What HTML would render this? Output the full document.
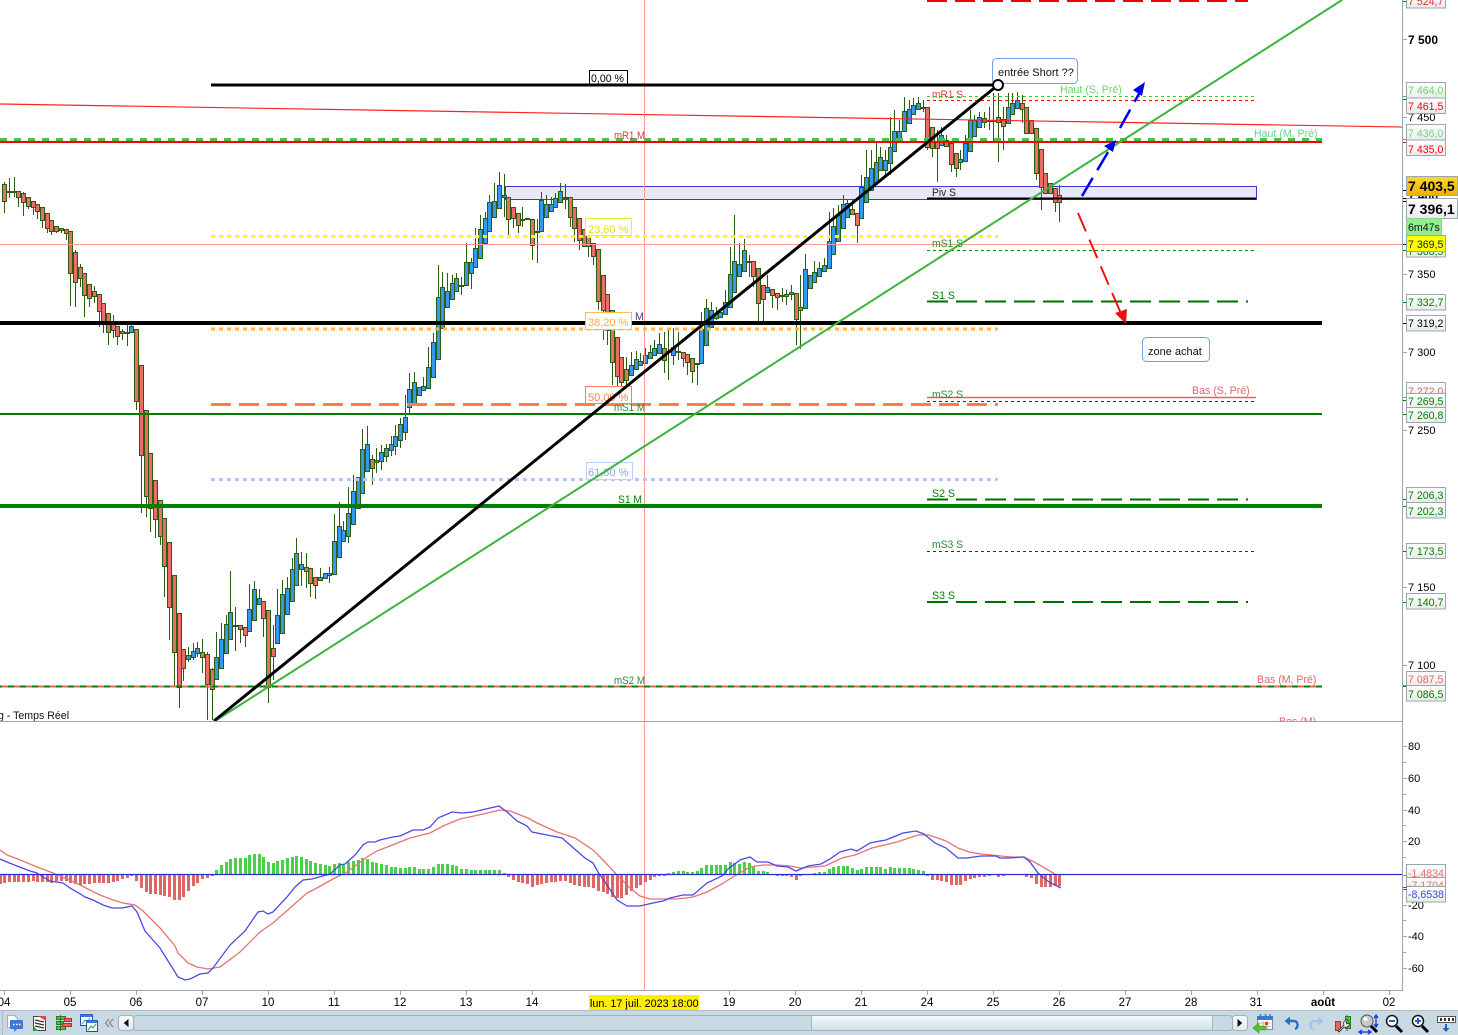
<!DOCTYPE html>
<html><head><meta charset="utf-8"><title>Chart</title>
<style>
html,body{margin:0;padding:0;background:#fff;width:1458px;height:1035px;overflow:hidden}
svg{display:block;font-family:"Liberation Sans",sans-serif;font-size:10.6px}
</style></head><body>
<svg width="1458" height="1035" viewBox="0 0 1458 1035" xmlns="http://www.w3.org/2000/svg">
<defs>
<linearGradient id="lb" x1="0" y1="0" x2="0" y2="1"><stop offset="0" stop-color="#fff"/><stop offset="1" stop-color="#eaecec"/></linearGradient>
<linearGradient id="gold" x1="0" y1="0" x2="0" y2="1"><stop offset="0" stop-color="#ffd92e"/><stop offset="1" stop-color="#efae00"/></linearGradient>
<linearGradient id="thumb" x1="0" y1="0" x2="0" y2="1"><stop offset="0" stop-color="#f2fbf9"/><stop offset="1" stop-color="#cfe2e6"/></linearGradient>
<linearGradient id="btn" x1="0" y1="0" x2="0" y2="1"><stop offset="0" stop-color="#fbfdfd"/><stop offset="1" stop-color="#dfe8ec"/></linearGradient>
</defs>
<rect width="1458" height="1035" fill="#fff"/>

<!-- pivot box -->
<rect x="505.5" y="186.5" width="751" height="13" fill="#e8e8f8" stroke="#3a3ad0"/>

<!-- wicks -->
<path fill="none" stroke="#2b5c12" stroke-width="1" d="M4.5 182V213M9.5 178V198M14.5 177V197M18.5 191V207M23.5 192V216M28.5 197V209M33.5 201V215M37.5 204V219M42.5 207V228M47.5 213V233M51.5 220V235M56.5 226V233M61.5 228V233M66.5 229V240M70.5 231V306M75.5 250V307M80.5 264V287M84.5 273V317M89.5 284V307M94.5 286V303M99.5 294V327M103.5 303V333M108.5 313V345M113.5 315V338M117.5 326V345M122.5 329V340M127.5 325V346M131.5 325V332M136.5 329V410M141.5 365V513M146.5 410V517M150.5 453V532M155.5 480V538M160.5 500V545M164.5 518V597M169.5 542V640M174.5 575V687M179.5 613V708M183.5 649V681M188.5 647V662M193.5 643V660M197.5 642V657M202.5 639V673M207.5 652V720M212.5 668V720M216.5 632V679M221.5 623V668M226.5 615V653M230.5 571V639M235.5 607V651M240.5 625V643M245.5 627V647M249.5 584V631M254.5 581V620M259.5 589V604M263.5 601V637M268.5 610V703M273.5 625V680M277.5 589V643M282.5 580V633M287.5 577V614M292.5 558V601M296.5 538V585M301.5 552V586M306.5 553V588M310.5 568V597M315.5 577V599M320.5 568V580M325.5 573V578M329.5 567V583M334.5 514V574M339.5 502V557M343.5 521V541M348.5 487V543M353.5 475V524M358.5 477V508M362.5 429V493M367.5 426V471M372.5 455V485M376.5 448V473M381.5 445V470M386.5 444V462M391.5 436V456M395.5 425V455M400.5 418V448M405.5 395V440M409.5 373V415M414.5 372V403M419.5 387V395M423.5 377V390M428.5 347V388M433.5 333V377M438.5 265V359M442.5 272V328M447.5 273V307M452.5 275V299M456.5 273V291M461.5 277V295M466.5 243V285M471.5 258V289M475.5 228V267M480.5 215V258M485.5 212V243M489.5 195V231M494.5 183V217M499.5 172V208M504.5 174V217M508.5 197V235M513.5 207V228M518.5 213V233M522.5 207V227M527.5 218V219M532.5 219V260M537.5 219V263M541.5 192V231M546.5 195V217M551.5 197V211M555.5 193V207M560.5 183V202M565.5 184V209M570.5 197V227M574.5 207V242M579.5 218V250M584.5 229V246M588.5 237V257M593.5 243V265M598.5 249V310M603.5 275V340M607.5 294V345M612.5 310V385M617.5 337V387M621.5 357V387M626.5 357V387M631.5 352V375M636.5 351V369M640.5 353V365M645.5 348V363M650.5 345V358M654.5 340V355M659.5 333V353M664.5 332V373M668.5 328V380M673.5 328V365M678.5 332V360M683.5 352V367M687.5 354V375M692.5 358V383M697.5 363V385M701.5 312V363M706.5 299V345M711.5 302V327M716.5 307V320M720.5 312V317M725.5 290V314M730.5 247V307M734.5 215V292M739.5 243V276M744.5 239V271M749.5 255V277M753.5 261V287M758.5 268V321M763.5 285V321M767.5 275V292M772.5 289V308M777.5 293V310M782.5 288V302M786.5 290V305M791.5 285V300M796.5 293V345M800.5 275V349M805.5 254V308M810.5 275V288M814.5 261V282M819.5 262V276M824.5 258V271M829.5 212V268M833.5 208V254M838.5 205V241M843.5 195V228M847.5 200V217M852.5 200V214M857.5 213V243M861.5 175V218M866.5 150V202M871.5 150V190M876.5 143V182M880.5 147V170M885.5 150V175M890.5 117V175M894.5 110V151M899.5 120V142M904.5 97V131M909.5 100V123M913.5 98V114M918.5 97V109M923.5 100V112M927.5 107V150M932.5 127V157M937.5 130V182M941.5 127V145M946.5 135V146M951.5 143V172M956.5 153V177M960.5 150V170M965.5 135V161M970.5 110V151M974.5 115V136M979.5 112V127M984.5 112V128M989.5 107V130M993.5 93V143M998.5 93V162M1003.5 107V150M1008.5 93V123M1012.5 93V114M1017.5 92V108M1022.5 95V123M1026.5 107V133M1031.5 120V133M1036.5 128V180M1041.5 149V210M1045.5 173V193M1050.5 183V193M1055.5 188V212M1059.5 185V222"/>
<!-- red bodies -->
<path fill="#ea6e65" stroke="#2b5c12" stroke-width="1" d="M2.5 184.5h4V201.5h-4zM12.5 191.5h4V192.5h-4zM16.5 191.5h4V197.5h-4zM21.5 193.5h4V202.5h-4zM26.5 197.5h4V206.5h-4zM31.5 201.5h4V207.5h-4zM35.5 204.5h4V211.5h-4zM40.5 207.5h4V220.5h-4zM45.5 213.5h4V228.5h-4zM49.5 220.5h4V231.5h-4zM54.5 226.5h4V231.5h-4zM59.5 228.5h4V230.5h-4zM64.5 229.5h4V233.5h-4zM68.5 231.5h4V273.5h-4zM73.5 252.5h4V282.5h-4zM78.5 267.5h4V278.5h-4zM82.5 273.5h4V295.5h-4zM87.5 284.5h4V298.5h-4zM92.5 291.5h4V296.5h-4zM97.5 294.5h4V311.5h-4zM101.5 303.5h4V323.5h-4zM106.5 313.5h4V332.5h-4zM111.5 322.5h4V330.5h-4zM115.5 326.5h4V336.5h-4zM120.5 331.5h4V333.5h-4zM125.5 332.5h4V333.5h-4zM134.5 329.5h4V401.5h-4zM139.5 365.5h4V455.5h-4zM144.5 410.5h4V496.5h-4zM148.5 453.5h4V508.5h-4zM153.5 480.5h4V519.5h-4zM158.5 500.5h4V536.5h-4zM162.5 518.5h4V566.5h-4zM167.5 542.5h4V607.5h-4zM172.5 575.5h4V652.5h-4zM177.5 613.5h4V687.5h-4zM181.5 649.5h4V668.5h-4zM200.5 652.5h4V657.5h-4zM205.5 654.5h4V684.5h-4zM210.5 669.5h4V689.5h-4zM233.5 625.5h4V626.5h-4zM238.5 625.5h4V629.5h-4zM243.5 627.5h4V635.5h-4zM261.5 601.5h4V618.5h-4zM266.5 610.5h4V687.5h-4zM271.5 648.5h4V656.5h-4zM304.5 567.5h4V571.5h-4zM308.5 568.5h4V583.5h-4zM313.5 577.5h4V585.5h-4zM370.5 459.5h4V468.5h-4zM459.5 285.5h4V286.5h-4zM506.5 197.5h4V219.5h-4zM511.5 207.5h4V218.5h-4zM516.5 213.5h4V225.5h-4zM520.5 219.5h4V220.5h-4zM530.5 219.5h4V245.5h-4zM535.5 231.5h4V232.5h-4zM563.5 197.5h4V198.5h-4zM568.5 197.5h4V217.5h-4zM572.5 207.5h4V228.5h-4zM577.5 218.5h4V240.5h-4zM582.5 229.5h4V246.5h-4zM586.5 237.5h4V246.5h-4zM591.5 243.5h4V256.5h-4zM596.5 249.5h4V301.5h-4zM601.5 275.5h4V310.5h-4zM605.5 294.5h4V330.5h-4zM610.5 310.5h4V362.5h-4zM615.5 337.5h4V376.5h-4zM619.5 357.5h4V382.5h-4zM624.5 369.5h4V380.5h-4zM662.5 348.5h4V360.5h-4zM666.5 351.5h4V352.5h-4zM676.5 351.5h4V352.5h-4zM681.5 352.5h4V358.5h-4zM685.5 354.5h4V362.5h-4zM690.5 358.5h4V371.5h-4zM695.5 363.5h4V364.5h-4zM747.5 261.5h4V262.5h-4zM751.5 261.5h4V276.5h-4zM756.5 268.5h4V303.5h-4zM761.5 285.5h4V299.5h-4zM770.5 289.5h4V295.5h-4zM775.5 293.5h4V297.5h-4zM780.5 295.5h4V296.5h-4zM794.5 293.5h4V319.5h-4zM798.5 307.5h4V310.5h-4zM850.5 209.5h4V214.5h-4zM855.5 213.5h4V225.5h-4zM921.5 107.5h4V108.5h-4zM925.5 107.5h4V147.5h-4zM930.5 127.5h4V148.5h-4zM935.5 141.5h4V148.5h-4zM944.5 140.5h4V146.5h-4zM949.5 143.5h4V164.5h-4zM954.5 153.5h4V168.5h-4zM987.5 120.5h4V121.5h-4zM991.5 120.5h4V121.5h-4zM996.5 117.5h4V122.5h-4zM1001.5 119.5h4V126.5h-4zM1020.5 103.5h4V109.5h-4zM1024.5 107.5h4V133.5h-4zM1029.5 120.5h4V133.5h-4zM1034.5 128.5h4V173.5h-4zM1039.5 149.5h4V187.5h-4zM1043.5 173.5h4V193.5h-4zM1048.5 183.5h4V193.5h-4zM1053.5 188.5h4V202.5h-4zM1057.5 195.5h4V202.5h-4z"/>
<!-- blue bodies -->
<path fill="#3399ee" stroke="#2b5c12" stroke-width="1" d="M7.5 191.5h4V192.5h-4zM129.5 326.5h4V332.5h-4zM186.5 655.5h4V659.5h-4zM191.5 651.5h4V657.5h-4zM195.5 648.5h4V653.5h-4zM214.5 657.5h4V679.5h-4zM219.5 639.5h4V668.5h-4zM224.5 624.5h4V653.5h-4zM228.5 612.5h4V639.5h-4zM247.5 609.5h4V631.5h-4zM252.5 589.5h4V620.5h-4zM257.5 598.5h4V604.5h-4zM275.5 615.5h4V643.5h-4zM280.5 594.5h4V633.5h-4zM285.5 588.5h4V614.5h-4zM290.5 569.5h4V601.5h-4zM294.5 553.5h4V585.5h-4zM299.5 564.5h4V569.5h-4zM318.5 577.5h4V580.5h-4zM323.5 573.5h4V578.5h-4zM327.5 573.5h4V575.5h-4zM332.5 541.5h4V574.5h-4zM337.5 526.5h4V557.5h-4zM341.5 530.5h4V541.5h-4zM346.5 513.5h4V536.5h-4zM351.5 491.5h4V524.5h-4zM356.5 477.5h4V508.5h-4zM360.5 449.5h4V493.5h-4zM365.5 444.5h4V471.5h-4zM374.5 460.5h4V462.5h-4zM379.5 452.5h4V461.5h-4zM384.5 448.5h4V456.5h-4zM389.5 444.5h4V450.5h-4zM393.5 436.5h4V446.5h-4zM398.5 424.5h4V440.5h-4zM403.5 417.5h4V432.5h-4zM407.5 389.5h4V407.5h-4zM412.5 382.5h4V403.5h-4zM417.5 387.5h4V395.5h-4zM421.5 386.5h4V390.5h-4zM426.5 367.5h4V388.5h-4zM431.5 342.5h4V377.5h-4zM436.5 297.5h4V359.5h-4zM440.5 287.5h4V328.5h-4zM445.5 291.5h4V307.5h-4zM450.5 283.5h4V299.5h-4zM454.5 278.5h4V291.5h-4zM464.5 262.5h4V285.5h-4zM469.5 262.5h4V273.5h-4zM473.5 248.5h4V267.5h-4zM478.5 229.5h4V258.5h-4zM483.5 218.5h4V243.5h-4zM487.5 202.5h4V231.5h-4zM492.5 201.5h4V217.5h-4zM497.5 185.5h4V208.5h-4zM502.5 195.5h4V197.5h-4zM525.5 218.5h4V219.5h-4zM539.5 200.5h4V231.5h-4zM544.5 204.5h4V217.5h-4zM549.5 204.5h4V211.5h-4zM553.5 198.5h4V207.5h-4zM558.5 191.5h4V202.5h-4zM629.5 365.5h4V375.5h-4zM634.5 359.5h4V369.5h-4zM638.5 361.5h4V365.5h-4zM643.5 355.5h4V363.5h-4zM648.5 352.5h4V358.5h-4zM652.5 348.5h4V355.5h-4zM657.5 344.5h4V353.5h-4zM671.5 347.5h4V355.5h-4zM699.5 329.5h4V363.5h-4zM704.5 308.5h4V345.5h-4zM709.5 310.5h4V327.5h-4zM714.5 314.5h4V318.5h-4zM718.5 312.5h4V317.5h-4zM723.5 302.5h4V314.5h-4zM728.5 274.5h4V307.5h-4zM732.5 261.5h4V292.5h-4zM737.5 264.5h4V276.5h-4zM742.5 250.5h4V271.5h-4zM765.5 287.5h4V292.5h-4zM784.5 294.5h4V296.5h-4zM789.5 292.5h4V294.5h-4zM803.5 269.5h4V308.5h-4zM808.5 275.5h4V288.5h-4zM812.5 272.5h4V282.5h-4zM817.5 268.5h4V276.5h-4zM822.5 265.5h4V271.5h-4zM827.5 241.5h4V268.5h-4zM831.5 226.5h4V254.5h-4zM836.5 215.5h4V241.5h-4zM841.5 204.5h4V228.5h-4zM845.5 203.5h4V217.5h-4zM859.5 187.5h4V218.5h-4zM864.5 177.5h4V202.5h-4zM869.5 168.5h4V190.5h-4zM874.5 162.5h4V182.5h-4zM878.5 157.5h4V170.5h-4zM883.5 160.5h4V170.5h-4zM888.5 147.5h4V163.5h-4zM892.5 131.5h4V151.5h-4zM897.5 131.5h4V142.5h-4zM902.5 111.5h4V131.5h-4zM907.5 109.5h4V123.5h-4zM911.5 105.5h4V114.5h-4zM916.5 103.5h4V109.5h-4zM939.5 135.5h4V145.5h-4zM958.5 159.5h4V162.5h-4zM963.5 143.5h4V161.5h-4zM968.5 120.5h4V151.5h-4zM972.5 120.5h4V136.5h-4zM977.5 117.5h4V127.5h-4zM982.5 118.5h4V122.5h-4zM1006.5 107.5h4V123.5h-4zM1010.5 103.5h4V114.5h-4zM1015.5 100.5h4V108.5h-4z"/>

<!-- long red line -->
<line x1="0" y1="104" x2="1402" y2="127" stroke="#f22" stroke-width="1.2"/>
<!-- crosshair -->
<line x1="0" y1="244.5" x2="1402" y2="244.5" stroke="#ff9999" stroke-width="1"/>
<line x1="644.5" y1="0" x2="644.5" y2="990" stroke="#ff9999" stroke-width="1"/>

<!-- fib lines -->
<line x1="211" y1="236.5" x2="998" y2="236.5" stroke="#ffff00" stroke-width="3" stroke-dasharray="4 4"/>
<line x1="211" y1="329" x2="998" y2="329" stroke="#ffb83d" stroke-width="3" stroke-dasharray="4 4"/>
<line x1="211" y1="404.5" x2="998" y2="404.5" stroke="#ff7f40" stroke-width="3" stroke-dasharray="20 8"/>
<line x1="211" y1="479.5" x2="998" y2="479.5" stroke="#b3c6ff" stroke-width="3" stroke-dasharray="4 4"/>

<!-- monthly lines -->
<line x1="0" y1="139.5" x2="1322" y2="139.5" stroke="#44c444" stroke-width="3" stroke-dasharray="7 7"/>
<line x1="0" y1="142" x2="1322" y2="142" stroke="#f00" stroke-width="2"/>
<line x1="0" y1="323" x2="1322" y2="323" stroke="#000" stroke-width="4"/>
<line x1="0" y1="414" x2="1322" y2="414" stroke="#008000" stroke-width="2"/>
<line x1="0" y1="506" x2="1322" y2="506" stroke="#008000" stroke-width="4"/>
<line x1="0" y1="686.5" x2="1322" y2="686.5" stroke="#008000" stroke-width="2"/>
<line x1="2" y1="686.5" x2="1322" y2="686.5" stroke="#e06666" stroke-width="2" stroke-dasharray="6 6"/>

<!-- weekly lines -->
<line x1="927" y1="0.5" x2="1248" y2="0.5" stroke="#e00" stroke-width="3" stroke-dasharray="20 8"/>
<line x1="927" y1="96.5" x2="1256" y2="96.5" stroke="#44c444" stroke-width="1" stroke-dasharray="3 3"/>
<line x1="927" y1="100.5" x2="1256" y2="100.5" stroke="#f00" stroke-width="1" stroke-dasharray="3 3"/>
<line x1="927" y1="198.5" x2="1256" y2="198.5" stroke="#000" stroke-width="2"/>
<line x1="927" y1="250.5" x2="1256" y2="250.5" stroke="#008000" stroke-width="1" stroke-dasharray="3 3"/>
<line x1="927" y1="301.5" x2="1248" y2="301.5" stroke="#006f00" stroke-width="2" stroke-dasharray="21 8"/>
<line x1="927" y1="397.5" x2="1256" y2="397.5" stroke="#e06666" stroke-width="1.5"/>
<line x1="927" y1="401.5" x2="1256" y2="401.5" stroke="#333" stroke-width="1" stroke-dasharray="3 3"/>
<line x1="927" y1="499.5" x2="1248" y2="499.5" stroke="#006f00" stroke-width="2" stroke-dasharray="21 8"/>
<line x1="927" y1="551.5" x2="1256" y2="551.5" stroke="#333" stroke-width="1" stroke-dasharray="3 3"/>
<line x1="927" y1="602" x2="1248" y2="602" stroke="#006f00" stroke-width="2" stroke-dasharray="21 8"/>

<!-- chart labels -->
<text x="932" y="98" fill="#e04040" textLength="31" lengthAdjust="spacingAndGlyphs">mR1 S</text>
<text x="932" y="196" fill="#222" textLength="24" lengthAdjust="spacingAndGlyphs">Piv S</text>
<text x="932" y="247" fill="#2a8a3a" textLength="31" lengthAdjust="spacingAndGlyphs">mS1 S</text>
<text x="932" y="299" fill="#008000" textLength="23" lengthAdjust="spacingAndGlyphs">S1 S</text>
<text x="932" y="398" fill="#2a8a3a" textLength="31" lengthAdjust="spacingAndGlyphs">mS2 S</text>
<text x="932" y="497" fill="#008000" textLength="23" lengthAdjust="spacingAndGlyphs">S2 S</text>
<text x="932" y="548" fill="#2a8a3a" textLength="31" lengthAdjust="spacingAndGlyphs">mS3 S</text>
<text x="932" y="599" fill="#008000" textLength="23" lengthAdjust="spacingAndGlyphs">S3 S</text>
<text x="614" y="139" fill="#d04040" textLength="31" lengthAdjust="spacingAndGlyphs">mR1 M</text>
<text x="614" y="411" fill="#2a8a3a" textLength="31" lengthAdjust="spacingAndGlyphs">mS1 M</text>
<text x="618" y="503" fill="#008000" textLength="24" lengthAdjust="spacingAndGlyphs">S1 M</text>
<text x="614" y="684" fill="#2a8a3a" textLength="31" lengthAdjust="spacingAndGlyphs">mS2 M</text>
<text x="635" y="320" fill="#446">M</text>
<text x="1060" y="93" fill="#66d866">Haut (S, Pré)</text>
<text x="1254" y="137" fill="#66d888">Haut (M, Pré)</text>
<text x="1192" y="394" fill="#e06666">Bas (S, Pré)</text>
<text x="1257" y="683" fill="#e06666">Bas (M, Pré)</text>
<text x="1279" y="725" fill="#e06666">Bas (M)</text>
<text x="-2" y="719" fill="#111">g - Temps Réel</text>

<!-- fib boxes -->
<rect x="585.5" y="218.5" width="46" height="17" fill="#fff" stroke="#eeee33"/>
<text x="588" y="233" fill="#e8dc20" font-size="11">23,60 %</text>
<rect x="585.5" y="312.5" width="46" height="17" fill="#fff" stroke="#ffbb55"/>
<text x="588" y="326" fill="#ffaa40" font-size="11">38,20 %</text>
<rect x="585.5" y="386.5" width="46" height="17" fill="#fff" stroke="#ff8050"/>
<text x="588" y="401" fill="#ff8050" font-size="11">50,00 %</text>
<rect x="586.5" y="462.5" width="46" height="17" fill="#fff" stroke="#bcd0ff"/>
<text x="588" y="476" fill="#8fa8e0" font-size="11">61,80 %</text>
<rect x="589.5" y="70.5" width="38" height="15" fill="#fff" stroke="#000"/>
<text x="591" y="82" fill="#000">0,00 %</text>

<!-- top black level -->
<line x1="211" y1="85" x2="998" y2="85" stroke="#000" stroke-width="3"/>
<!-- trend lines -->
<line x1="215" y1="721" x2="1342" y2="0" stroke="#3cb43c" stroke-width="2"/>
<line x1="214" y1="721" x2="998" y2="85" stroke="#000" stroke-width="3"/>

<!-- bubbles -->
<rect x="992.5" y="58.5" width="85" height="25" rx="4" fill="#fff" stroke="#6f9fef"/>
<text x="998" y="76" fill="#111" font-size="11">entrée Short ??</text>
<circle cx="998" cy="85" r="5" fill="#fff" stroke="#000" stroke-width="2"/>
<rect x="1142.5" y="337.5" width="67" height="24" rx="4" fill="#fff" stroke="#6f9fef"/>
<text x="1148" y="355" fill="#111" font-size="11">zone achat</text>

<!-- arrows -->
<path d="M1082 196L1114 142" stroke="#0000ee" stroke-width="2.5" fill="none" stroke-dasharray="21 9"/>
<polygon points="1116,140 1104,146 1113,152" fill="#0000ee"/>
<path d="M1120 128L1140 92" stroke="#0000ee" stroke-width="2.5" fill="none" stroke-dasharray="21 9"/>
<polygon points="1145,82 1133,90 1142,96" fill="#0000ee"/>
<path d="M1078 213L1122 316" stroke="#ee1111" stroke-width="2" fill="none" stroke-dasharray="20 9"/>
<polygon points="1126,324 1115,313 1127,309" fill="#ee1111"/>

<!-- lower panel -->
<rect x="0" y="722" width="1458" height="288" fill="#fff"/>
<line x1="644.5" y1="722" x2="644.5" y2="990" stroke="#ff9999" stroke-width="1"/>
<line x1="0" y1="721.5" x2="1402" y2="721.5" stroke="#9aa7ae" stroke-width="1"/>

<!-- histogram -->
<path fill="none" stroke="#e06666" stroke-width="3" d="M0.5 874v10M4.5 874v9M9.5 874v8M14.5 874v8M18.5 874v8M23.5 874v8M28.5 874v8M33.5 874v7M37.5 874v8M42.5 874v8M47.5 874v8M51.5 874v9M56.5 874v7M61.5 874v7M66.5 874v7M70.5 874v9M75.5 874v10M80.5 874v11M84.5 874v10M89.5 874v10M94.5 874v9M99.5 874v9M103.5 874v9M108.5 874v9M113.5 874v8M117.5 874v7M122.5 874v5M127.5 874v4M131.5 874v2M136.5 874v7M141.5 874v14M146.5 874v18M150.5 874v20M155.5 874v20M160.5 874v21M164.5 874v22M169.5 874v23M174.5 874v26M179.5 874v26M183.5 874v23M188.5 874v17M193.5 874v12M197.5 874v9M202.5 874v5M207.5 874v4M212.5 874v2M508.5 874v3M513.5 874v6M518.5 874v8M522.5 874v9M527.5 874v10M532.5 874v13M537.5 874v11M541.5 874v10M546.5 874v9M551.5 874v8M555.5 874v8M560.5 874v7M565.5 874v7M570.5 874v9M574.5 874v11M579.5 874v12M584.5 874v13M588.5 874v13M593.5 874v14M598.5 874v17M603.5 874v18M607.5 874v20M612.5 874v23M617.5 874v24M621.5 874v24M626.5 874v21M631.5 874v17M636.5 874v14M640.5 874v11M645.5 874v8M650.5 874v6M654.5 874v3M659.5 874v2M664.5 874v2M777.5 874v2M782.5 874v2M786.5 874v2M791.5 874v3M796.5 874v6M800.5 874v2M927.5 874v2M932.5 874v6M937.5 874v6M941.5 874v7M946.5 874v8M951.5 874v11M956.5 874v11M960.5 874v11M965.5 874v7M970.5 874v5M974.5 874v4M979.5 874v3M984.5 874v3M989.5 874v2M998.5 874v3M1003.5 874v2M1008.5 874v1M1022.5 874v1M1026.5 874v3M1031.5 874v4M1036.5 874v10M1041.5 874v13M1045.5 874v13M1050.5 874v13M1055.5 874v12M1059.5 874v12"/>
<path fill="none" stroke="#4cd04c" stroke-width="3" d="M216.5 874v-4M221.5 874v-9M226.5 874v-12M230.5 874v-15M235.5 874v-16M240.5 874v-16M245.5 874v-16M249.5 874v-19M254.5 874v-20M259.5 874v-20M263.5 874v-17M268.5 874v-12M273.5 874v-11M277.5 874v-13M282.5 874v-14M287.5 874v-16M292.5 874v-17M296.5 874v-18M301.5 874v-17M306.5 874v-15M310.5 874v-13M315.5 874v-11M320.5 874v-10M325.5 874v-9M329.5 874v-8M334.5 874v-10M339.5 874v-11M343.5 874v-9M348.5 874v-12M353.5 874v-13M358.5 874v-14M362.5 874v-16M367.5 874v-15M372.5 874v-12M376.5 874v-11M381.5 874v-10M386.5 874v-9M391.5 874v-7M395.5 874v-7M400.5 874v-6M405.5 874v-6M409.5 874v-7M414.5 874v-7M419.5 874v-5M423.5 874v-5M428.5 874v-5M433.5 874v-7M438.5 874v-10M442.5 874v-10M447.5 874v-10M452.5 874v-9M456.5 874v-8M461.5 874v-5M466.5 874v-5M471.5 874v-4M475.5 874v-4M480.5 874v-4M485.5 874v-4M489.5 874v-4M494.5 874v-4M499.5 874v-4M504.5 874v-1M668.5 874v-1M673.5 874v-2M678.5 874v-3M683.5 874v-3M687.5 874v-2M692.5 874v-2M697.5 874v-3M701.5 874v-6M706.5 874v-9M711.5 874v-9M716.5 874v-9M720.5 874v-9M725.5 874v-9M730.5 874v-12M734.5 874v-11M739.5 874v-10M744.5 874v-12M749.5 874v-11M753.5 874v-7M758.5 874v-3M763.5 874v-3M767.5 874v-2M814.5 874v-1M819.5 874v-2M824.5 874v-2M829.5 874v-5M833.5 874v-7M838.5 874v-8M843.5 874v-8M847.5 874v-8M852.5 874v-6M857.5 874v-4M861.5 874v-5M866.5 874v-7M871.5 874v-7M876.5 874v-7M880.5 874v-7M885.5 874v-5M890.5 874v-7M894.5 874v-6M899.5 874v-6M904.5 874v-6M909.5 874v-6M913.5 874v-5M918.5 874v-4M923.5 874v-3"/>

<!-- macd lines -->
<polyline fill="none" stroke="#e57373" stroke-width="1.3" points="0,850 7,855 18,859 37,867 53,873 67,879 80,885 100,895 113,900 123,903 135,905 143,911 160,928 175,946 178,953 188,963 197,967 208,969 220,967 240,952 260,932 273,923 290,908 307,893 315,889 333,879 347,872 367,857 377,851 390,846 400,842 410,838 430,833 443,826 460,819 483,814 500,810 510,811 528,818 537,823 557,832 575,838 593,850 603,860 617,875 630,888 640,896 650,899 677,899 693,897 707,892 720,885 733,877 750,867 763,865 777,865 790,866 800,868 813,867 825,866 842,858 855,855 872,848 897,842 918,835 929,835 946,841 958,848 969,852 981,854 1011,857 1024,857 1036,863 1055,874"/>
<polyline fill="none" stroke="#4a4ae6" stroke-width="1.3" points="0,859 7,862 17,866 30,871 37,873 43,877 50,881 63,883 70,888 82,895 85,897 93,900 103,905 112,908 122,908 132,906 137,912 145,931 160,948 178,977 185,980 190,979 200,974 208,973 213,968 230,945 245,931 258,912 263,911 268,914 273,912 287,897 295,887 303,880 312,879 330,874 340,865 345,864 355,855 363,845 368,842 375,842 380,840 393,837 400,836 413,830 423,830 430,827 438,818 452,812 462,813 473,812 499,806 507,812 517,821 527,826 532,832 547,835 562,838 570,845 585,858 593,863 598,872 607,885 617,900 627,906 640,906 653,903 663,901 670,898 683,895 693,895 707,883 722,876 728,869 740,860 750,857 757,862 768,862 777,866 788,867 796,871 808,866 821,864 830,859 840,852 851,849 857,851 870,843 880,841 886,840 903,833 916,831 924,834 935,843 946,848 958,858 967,858 981,856 996,856 1000,858 1009,858 1024,857 1030,862 1038,873 1049,882 1061,888"/>
<line x1="0" y1="874.5" x2="1402" y2="874.5" stroke="#2a2ad8" stroke-width="1.2"/>

<!-- axes -->
<rect x="1402" y="0" width="1" height="991" fill="#9aa7ae"/>
<rect x="0" y="990" width="1403" height="1" fill="#9aa7ae"/>
<path stroke="#9aa7ae" fill="none" d="M1403 39.5h4M1403 117.5h4M1403 274.5h4M1403 352.5h4M1403 430.5h4M1403 587.5h4M1403 665.5h4M1403 746.5h4M1403 778.5h4M1403 810.5h4M1403 841.5h4M1403 905.5h4M1403 936.5h4M1403 968.5h4M1403 762.5h3M1403 794.5h3M1403 825.5h3M1403 857.5h3M1403 920.5h3M1403 952.5h3M4.5 991v4M70.5 991v4M136.5 991v4M202.5 991v4M268.5 991v4M334.5 991v4M400.5 991v4M466.5 991v4M532.5 991v4M729.5 991v4M795.5 991v4M861.5 991v4M927.5 991v4M993.5 991v4M1059.5 991v4M1125.5 991v4M1191.5 991v4M1257.5 991v4M1323.5 991v4M1389.5 991v4"/>
<path fill="none" d="M1403 1.5h4M1403 99.5h4M1403 142.5h4" stroke="#e00"/>
<path fill="none" d="M1403 96.5h4M1403 139.5h4" stroke="#44c444"/>
<path fill="none" d="M1403 250.5h4M1403 302.5h4M1403 400.5h4M1403 414.5h4M1403 499.5h4M1403 506.5h4M1403 551.5h4M1403 602.5h4M1403 686.5h4" stroke="#008000"/>
<path fill="none" d="M1403 190.5h4M1403 198.5h4M1403 201.5h4M1403 244.5h4M1403 323.5h4" stroke="#000"/>
<path fill="none" d="M1403 397.5h4M1403 685.5h4" stroke="#e06666"/>

<!-- price axis labels -->
<g fill="#000" font-size="11">
<text x="1408" y="44" font-weight="bold" font-size="12">7 500</text>
<text x="1408" y="121">7 450</text>
<text x="1408" y="278">7 350</text>
<text x="1408" y="356">7 300</text>
<text x="1408" y="434">7 250</text>
<text x="1408" y="591">7 150</text>
<text x="1408" y="669">7 100</text>
<text x="1408" y="750">80</text>
<text x="1408" y="782">60</text>
<text x="1408" y="814">40</text>
<text x="1408" y="845">20</text>
<text x="1408" y="909">-20</text>
<text x="1408" y="940">-40</text>
<text x="1408" y="972">-60</text>
<text x="1408" y="200" font-weight="bold" font-size="12">7 400</text>
</g>

<g stroke="#9aa7ae" fill="url(#lb)">
<rect x="1406.5" y="-7.5" width="39" height="15.5"/>
<rect x="1406.5" y="82.5" width="39" height="15.5"/>
<rect x="1406.5" y="98" width="39" height="15.5"/>
<rect x="1406.5" y="124.5" width="39" height="15.5"/>
<rect x="1406.5" y="140" width="39" height="15.5"/>
<rect x="1406.5" y="241.5" width="39" height="15.5"/>
<rect x="1406.5" y="294.5" width="39" height="15.5"/>
<rect x="1406.5" y="315.5" width="39" height="15.5"/>
<rect x="1406.5" y="382.5" width="39" height="15.5"/>
<rect x="1406.5" y="393.5" width="39" height="14"/>
<rect x="1406.5" y="407.5" width="39" height="15"/>
<rect x="1406.5" y="487.5" width="39" height="15"/>
<rect x="1406.5" y="502.5" width="39" height="15.5"/>
<rect x="1406.5" y="543.5" width="39" height="15"/>
<rect x="1406.5" y="593.5" width="39" height="15.5"/>
<rect x="1406.5" y="671.5" width="39" height="14"/>
<rect x="1406.5" y="685.5" width="39" height="15.5"/>
</g>
<text x="1408" y="5" fill="#e03030">7 524,7</text>
<text x="1408" y="94" fill="#66d866">7 464,0</text>
<text x="1408" y="110" fill="#f00">7 461,5</text>
<text x="1408" y="137" fill="#66d888">7 436,0</text>
<text x="1408" y="153" fill="#f00">7 435,0</text>
<text x="1408" y="255" fill="#008000">7 368,5</text>
<text x="1408" y="306" fill="#008000">7 332,7</text>
<text x="1408" y="327" fill="#000">7 319,2</text>
<text x="1408" y="395" fill="#e06666">7 272,0</text>
<rect x="1406.5" y="393.5" width="39" height="14" fill="url(#lb)" stroke="#9aa7ae"/>
<text x="1408" y="405" fill="#008000">7 269,5</text>
<text x="1408" y="419" fill="#008000">7 260,8</text>
<text x="1408" y="499" fill="#008000">7 206,3</text>
<text x="1408" y="515" fill="#008000">7 202,3</text>
<text x="1408" y="555" fill="#008000">7 173,5</text>
<text x="1408" y="606" fill="#008000">7 140,7</text>
<text x="1408" y="683" fill="#e06666">7 087,5</text>
<text x="1408" y="698" fill="#008000">7 086,5</text>

<rect x="1406.5" y="176.5" width="51" height="19" fill="url(#gold)" stroke="#9aa7ae"/>
<text x="1408" y="191" font-weight="bold" font-size="14" fill="#000">7 403,5</text>
<rect x="1406.5" y="198.5" width="51" height="20" fill="url(#lb)" stroke="#9aa7ae"/>
<text x="1408" y="214" font-weight="bold" font-size="14" fill="#000">7 396,1</text>
<rect x="1406.5" y="218.5" width="35" height="17" fill="#90ee90" stroke="#8fcf8f"/>
<text x="1408" y="231" fill="#111">6m47s</text>
<rect x="1406.5" y="235.5" width="39" height="16" fill="#ffff00" stroke="#9aa7ae"/>
<text x="1408" y="248" fill="#222">7 369,5</text>

<!-- macd labels -->
<rect x="1406.5" y="864.5" width="39" height="16" fill="url(#lb)" stroke="#9aa7ae"/>
<text x="1408" y="877" fill="#e57373">-1,4834</text>
<rect x="1406.5" y="877.5" width="39" height="12" fill="url(#lb)" stroke="#9aa7ae"/>
<text x="1408" y="889" fill="#e57373">-7,1704</text>
<rect x="1406.5" y="886.5" width="39" height="15.5" fill="url(#lb)" stroke="#9aa7ae"/>
<text x="1408" y="898" fill="#4444ee">-8,6538</text>
<path fill="none" d="M1403 875.5h4" stroke="#e06666"/>
<path fill="none" d="M1403 887.5h4M1403 889.5h4" stroke="#4444ee"/>

<!-- date axis -->
<g fill="#000" text-anchor="middle" font-size="11.5">
<text x="4" y="1006">04</text>
<text x="70" y="1006">05</text>
<text x="136" y="1006">06</text>
<text x="202" y="1006">07</text>
<text x="268" y="1006">10</text>
<text x="334" y="1006">11</text>
<text x="400" y="1006">12</text>
<text x="466" y="1006">13</text>
<text x="532" y="1006">14</text>
<text x="729" y="1006">19</text>
<text x="795" y="1006">20</text>
<text x="861" y="1006">21</text>
<text x="927" y="1006">24</text>
<text x="993" y="1006">25</text>
<text x="1059" y="1006">26</text>
<text x="1125" y="1006">27</text>
<text x="1191" y="1006">28</text>
<text x="1256" y="1006">31</text>
<text x="1323" y="1006" font-weight="bold">août</text>
<text x="1389" y="1006">02</text>
</g>
<rect x="589" y="995" width="110" height="15" fill="#ffee00"/>
<text x="590" y="1007" fill="#000" font-size="10.8">lun. 17 juil. 2023 18:00</text>

<!-- toolbar -->
<rect x="0" y="1010" width="1458" height="25" fill="#c9d9e3"/>
<rect x="0" y="1010" width="1458" height="1" fill="#aebcc5"/>
<rect x="2" y="1011" width="1" height="24" fill="#aebcc5"/>

<!-- left icons -->
<path d="M7.5 1015.5h7l3 3v9h-10z" fill="#fff" stroke="#aab"/>
<path d="M11 1020h11a1 1 0 0 1 1 1v7a1 1 0 0 1-1 1h-5l-3 3v-3h-3a1 1 0 0 1-1-1v-7a1 1 0 0 1 1-1z" fill="#3f78d8"/>
<path d="M13 1024.5h1.5M16 1024.5h1.5M19 1024.5h1.5" stroke="#fff" stroke-width="1.5"/>
<rect x="33.5" y="1016.5" width="12" height="14" fill="#fff" stroke="#444"/>
<path d="M35 1020l9 2M35 1023l9 2M35 1026l9 2" stroke="#333" stroke-width="1.4"/>
<path d="M38 1016h8v5z" fill="#d44"/>
<path d="M33.5 1031v-5l5 5z" fill="#3a3"/>
<path d="M56.5 1016.5h9v3h-9zM56.5 1021.5h7v3h-7zM56.5 1026.5h9v3h-9z" fill="#46c846" stroke="#2a7a2a"/>
<path d="M64.5 1018.5h7v3h-7zM62.5 1023.5h9v3h-9z" fill="#e86060" stroke="#a33"/>
<path d="M60.5 1015v16" stroke="#2a7a2a"/>
<rect x="80.5" y="1014.5" width="12" height="11" fill="#fff" stroke="#2050a8"/>
<rect x="80.5" y="1014.5" width="12" height="2.5" fill="#3c78d8"/>
<path d="M82 1024l3-4 2 2 3-4" stroke="#44b044" fill="none"/>
<rect x="86.5" y="1020.5" width="11" height="11" fill="#fff" stroke="#2050a8"/>
<rect x="86.5" y="1020.5" width="11" height="2.5" fill="#3c78d8"/>
<path d="M88 1030l3-4 2 2 3-4" stroke="#44b044" fill="none" stroke-width="1.2"/>
<path d="M109 1019l-3.500 4 3.500 4M113 1019l-3.500 4 3.500 4" stroke="#7d8a92" fill="none" stroke-width="1.3"/>

<!-- scrollbar -->
<rect x="133.500" y="1015.500" width="1099" height="15" rx="3" fill="#c9d9e3" stroke="#a2b1ba"/>
<rect x="811" y="1016" width="401" height="14" fill="url(#thumb)"/>
<path d="M811.500 1016v14M1212.500 1016v14" stroke="#a2b1ba"/>
<rect x="118.500" y="1015.500" width="15" height="15" rx="3" fill="url(#btn)" stroke="#a2b1ba"/>
<path d="M128 1020l-3.500 3 3.500 3z" fill="#111" stroke="#111"/>
<rect x="1232.500" y="1015.500" width="15" height="15" rx="3" fill="url(#btn)" stroke="#a2b1ba"/>
<path d="M1238 1020l3.500 3-3.500 3z" fill="#111" stroke="#111"/>

<!-- right icons -->
<rect x="1257.500" y="1016.500" width="15" height="13" fill="#fff" stroke="#88a"/>
<rect x="1257" y="1016" width="16" height="4" fill="#3a78c8"/>
<path d="M1260.500 1014v4M1265.500 1014v4M1270 1014v4" stroke="#3a78c8" stroke-width="1.5"/>
<path d="M1259 1023h12M1259 1026.500h12M1263 1021v8M1267 1021v8" stroke="#bbb"/>
<rect x="1265" y="1022" width="3" height="3" fill="#e33"/>
<path d="M1253 1028l6-5v3h7v4h-7v3z" fill="#55c030" stroke="#3a9a20" stroke-width=".6"/>
<path d="M1295 1029c3.500-1 3.500-8-1-8h-6" fill="none" stroke="#2a6fc4" stroke-width="2.500"/>
<path d="M1290 1016.500l-5.500 4.500 5.500 4.500z" fill="#2a6fc4"/>
<path d="M1313 1029c-3.500-1-3.500-8 1-8h6" fill="none" stroke="#a3c3ea" stroke-width="2.500"/>
<path d="M1318 1016.500l5.500 4.500-5.500 4.500z" fill="#a3c3ea"/>
<rect x="1335.500" y="1021.500" width="5" height="9" fill="#e86060" stroke="#a33"/>
<rect x="1345.500" y="1016.500" width="5" height="12" fill="#46c846" stroke="#2a7a2a"/>
<path d="M1347 1015v2M1347 1028v3" stroke="#2a7a2a"/>
<path d="M1338 1031l6-6c-1-3 1-6 4-5l-2 2 1 2 2-1c1 3-2 5-5 4l-5 5z" fill="#fff" stroke="#222" stroke-width=".8"/>
<circle cx="1367" cy="1021" r="6" fill="#c8c8c8" stroke="#555"/>
<circle cx="1365.500" cy="1019" r="2" fill="#fff"/>
<path d="M1371 1026l6 6" stroke="#000" stroke-width="3"/>
<path d="M1376 1016v10M1374 1018l2-3 2 3M1374 1024l2 3 2-3M1360 1032h10M1362 1030l-3 2 3 2M1368 1030l3 2-3 2" stroke="#0a30e0" fill="none" stroke-width="1.200"/>
<circle cx="1392" cy="1021" r="5.500" fill="#fff" stroke="#111" stroke-width="1.500"/>
<path d="M1389 1021h6" stroke="#2a5ec0" stroke-width="2"/>
<path d="M1396 1026l6 6" stroke="#000" stroke-width="3"/>
<circle cx="1418" cy="1021" r="5.500" fill="#fff" stroke="#111" stroke-width="1.500"/>
<path d="M1415 1021h6M1418 1018v6" stroke="#2a5ec0" stroke-width="2"/>
<path d="M1422 1026l6 6" stroke="#000" stroke-width="3"/>
<rect x="1437.500" y="1016.500" width="18" height="6" fill="#fff" stroke="#555"/>
<path d="M1440 1018h2v3h-2zM1444 1018h2v3h-2zM1448 1018h2v3h-2zM1452 1018h2v3h-2z" fill="#333"/>
<path d="M1446 1024v5" stroke="#2a5ec0" stroke-width="2"/>
<path d="M1442.500 1028h7l-3.500 4z" fill="#2a5ec0"/>
</svg>
</body></html>
